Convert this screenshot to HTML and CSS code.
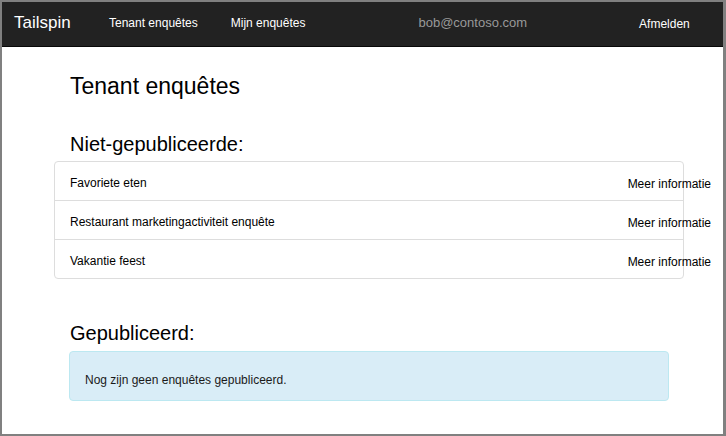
FILE: index.html
```html
<!DOCTYPE html>
<html lang="nl">
<head>
<meta charset="utf-8">
<title>Tenant enquêtes</title>
<link rel="stylesheet" href="styles.css">
</head>
<body>
<div class="frame">
  <header class="navbar">
    <a class="brand" href="#">Tailspin</a>
    <nav class="nav">
      <a href="#" class="nav-link">Tenant enquêtes</a>
      <a href="#" class="nav-link">Mijn enquêtes</a>
    </nav>
    <span class="user">bob@contoso.com</span>
    <a href="#" class="logout">Afmelden</a>
  </header>
  <main class="container">
    <h1 class="title">Tenant enquêtes</h1>
    <h2 class="section-title">Niet-gepubliceerde:</h2>
    <ul class="list">
      <li class="list-item"><span>Favoriete eten</span><a href="#" class="more">Meer informatie</a></li>
      <li class="list-item"><span>Restaurant marketingactiviteit enquête</span><a href="#" class="more">Meer informatie</a></li>
      <li class="list-item"><span>Vakantie feest</span><a href="#" class="more">Meer informatie</a></li>
    </ul>
    <h2 class="section-title published">Gepubliceerd:</h2>
    <div class="alert">Nog zijn geen enquêtes gepubliceerd.</div>
  </main>
</div>
</body>
</html>
```

FILE: styles.css
```css
* { box-sizing: border-box; }
html, body { margin: 0; padding: 0; }
body {
  font-family: "Liberation Sans", Arial, sans-serif;
  color: #000;
  background: #fff;
}
.frame {
  height: 436px;
  border-style: solid;
  border-color: #808080;
  border-width: 2px 3px 2px 2px;
  overflow: hidden;
}
.navbar {
  height: 45px;
  background: #222;
  border-bottom: 1px solid #080808;
  display: flex;
  align-items: center;
  padding-left: 12px;
}
.navbar a { text-decoration: none; }
.brand {
  color: #fff;
  font-size: 17px;
  width: 95px;
  margin-top: -2px;
}
.nav { display: flex; gap: 33px; margin-top: -3px; }
.nav-link { color: #fff; font-size: 12px; }
.user {
  color: #999;
  font-size: 13px;
  margin-left: 113px;
  margin-top: -3px;
}
.logout {
  color: #fff;
  font-size: 12px;
  margin-left: 112px;
  margin-top: -1px;
}
.container {
  padding-left: 68px;
  width: 667px;
}
.title {
  font-size: 23px;
  font-weight: normal;
  line-height: 26px;
  margin: 26px 0 0 0;
}
.section-title {
  font-size: 20px;
  font-weight: normal;
  line-height: 24px;
  margin: 33px 0 0 0;
}
.list {
  list-style: none;
  margin: 5px 0 0 -16px;
  padding: 0;
  width: 630px;
  border: 1px solid #ddd;
  border-radius: 4px;
}
.list-item {
  display: flex;
  justify-content: space-between;
  align-items: flex-start;
  padding: 12px 15px 7px 15px;
  line-height: 18px;
  height: 39px;
  font-size: 12px;
  border-top: 1px solid #ddd;
}
.list-item:first-child { border-top: 0; height: 38px; padding-top: 12px; }
.more {
  color: #000;
  text-decoration: none;
  margin-right: -43px;
  position: relative;
  top: 1px;
}
.published { margin-top: 42px; }
.alert {
  margin-top: 6px;
  margin-left: -1px;
  width: 600px;
  height: 50px;
  background: #d9edf7;
  border: 1px solid #bce8f1;
  border-radius: 4px;
  padding: 20px 15px 0 15px;
  font-size: 12px;
  color: #1a1a1a;
  line-height: 17px;
}
```
